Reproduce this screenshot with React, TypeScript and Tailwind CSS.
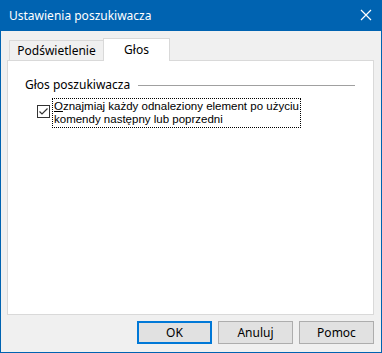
import React from 'react';

const font = { fontFamily: '"Noto Sans", "Liberation Sans", sans-serif' };

function Tab({ label, active }: { label: string; active?: boolean }) {
  return active ? (
    <div className="relative z-10 -ml-px -mb-px flex h-[23px] w-[67px] items-start justify-center border border-b-0 border-[#d9d9d9] bg-white pt-[2px]">
      {label}
    </div>
  ) : (
    <div className="flex h-[20px] w-[95px] items-center justify-center border border-b-0 border-[#d9d9d9] bg-[#f0f0f0]">
      {label}
    </div>
  );
}

function Button({ label, primary }: { label: string; primary?: boolean }) {
  return (
    <button
      className={
        primary
          ? 'h-[23px] w-[75px] border-2 border-[#0078d7] bg-[#e1e1e1] text-[12px] text-black'
          : 'h-[23px] w-[75px] border border-[#adadad] bg-[#e1e1e1] text-[12px] text-black'
      }
    >
      {label}
    </button>
  );
}

export default function App() {
  return (
    <div
      className="flex h-[353px] w-[382px] flex-col border-x border-b border-[#0063b1] bg-[#f0f0f0] text-[12px] text-black"
      style={font}
    >
      {/* Title bar */}
      <div className="-mx-px flex h-[31px] shrink-0 items-center justify-between bg-[#0063b1] pl-[9px] pr-[10px] text-white">
        <span className="leading-none">Ustawienia poszukiwacza</span>
        <svg width="12" height="12" viewBox="0 0 12 12" className="mb-[1px]">
          <path d="M1 1 L11 11 M11 1 L1 11" stroke="white" strokeWidth="1.2" fill="none" />
        </svg>
      </div>

      {/* Body */}
      <div className="flex flex-1 flex-col pl-[6px] pr-[7px] pt-[7px]">
        <div className="ml-[2px] flex h-[22px] items-end">
          <Tab label="Podświetlenie" />
          <Tab label="Głos" active />
        </div>

        <div className="h-[255px] border border-[#d9d9d9] bg-white">
          {/* Group header */}
          <div className="ml-[17px] mr-[18px] mt-[16px] flex items-center gap-[8px]">
            <span className="leading-[15px]">Głos poszukiwacza</span>
            <div className="mt-[1px] h-px flex-1 bg-[#a0a0a0]" />
          </div>

          {/* Checkbox */}
          <div className="ml-[29px] mt-[6px] flex items-start">
            <div className="mt-[7px] flex h-[13px] w-[13px] shrink-0 items-center justify-center border border-[#333333] bg-white">
              <svg width="11" height="11" viewBox="0 0 11 11">
                <path d="M1.5 5.5 L4 8 L9.5 2.5" stroke="#333333" strokeWidth="1.2" fill="none" />
              </svg>
            </div>
            <div className="ml-[2px] border border-dotted border-black px-px py-[1px] font-['Liberation_Sans',sans-serif] text-[11.5px] leading-[13px]">
              <div>
                <span className="underline">O</span>znajmiaj każdy odnaleziony element po użyciu
              </div>
              <div>komendy następny lub poprzedni</div>
            </div>
          </div>
        </div>

        {/* Buttons */}
        <div className="mt-[6px] flex justify-end gap-[6px]">
          <Button label="OK" primary />
          <Button label="Anuluj" />
          <Button label="Pomoc" />
        </div>
      </div>
    </div>
  );
}
